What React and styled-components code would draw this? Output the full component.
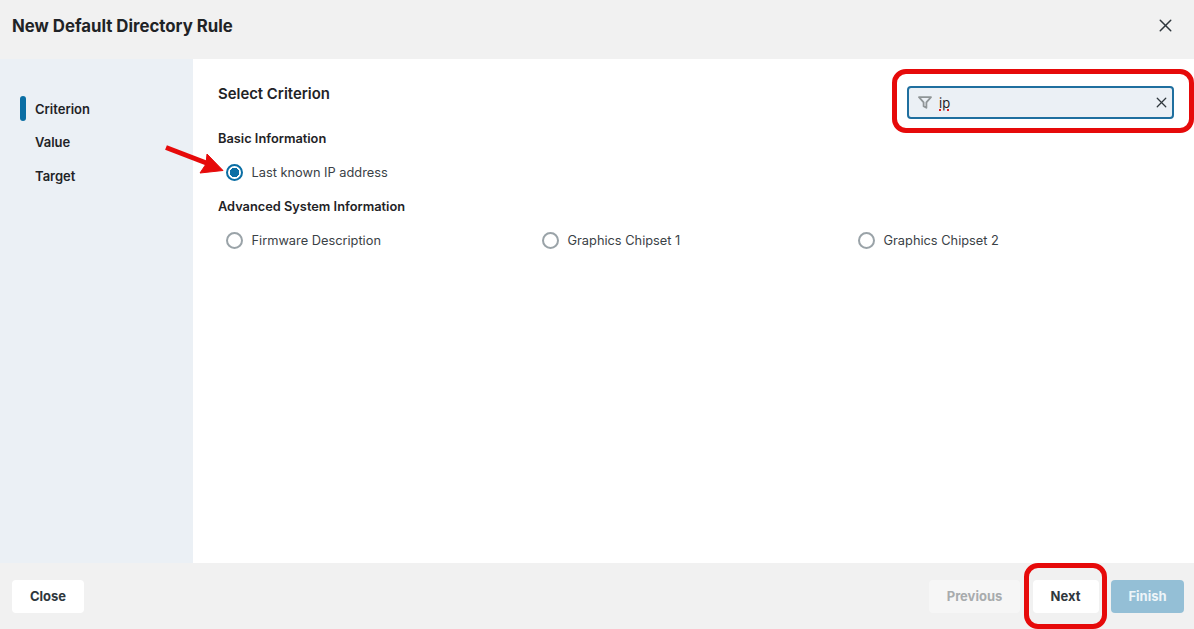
import React, { useState } from 'react';
import styled, { createGlobalStyle } from 'styled-components';
import { X } from 'lucide-react';

const GlobalStyle = createGlobalStyle`
  html, body {
    margin: 0;
    padding: 0;
    background: #fff;
    font-family: Inter, "Liberation Sans", sans-serif;
    color: #1f2326;
  }
  * { box-sizing: border-box; }
`;

const basicOptions = ['Last known IP address'];
const advancedOptions = ['Firmware Description', 'Graphics Chipset 1', 'Graphics Chipset 2'];
const steps = ['Criterion', 'Value', 'Target'];

function App() {
  const [selected, setSelected] = useState('Last known IP address');

  const renderOption = (label) => (
    <RadioRow key={label} onClick={() => setSelected(label)}>
      <RadioCircle checked={selected === label} />
      <span>{label}</span>
    </RadioRow>
  );

  return (
    <Dialog>
      <GlobalStyle />
      <Header>
        <Title>New Default Directory Rule</Title>
        <IconButton><X size={21} strokeWidth={1.7} /></IconButton>
      </Header>

      <Body>
        <Sidebar>
          {steps.map((step, i) => (
            <Step key={step} active={i === 0}>{step}</Step>
          ))}
        </Sidebar>

        <Main>
          <TopRow>
            <Heading>Select Criterion</Heading>
            <SearchBox>
              <svg width="14" height="13" viewBox="0 0 14 13" fill="none" stroke="#8f9597" strokeWidth="1.8" strokeLinejoin="round">
                <path d="M1 1.2h12L8.4 6.4v5.4L5.6 10.2V6.4z" />
              </svg>
              <SearchText><Misspelled>ip</Misspelled></SearchText>
              <X size={17} strokeWidth={1.8} color="#2f373d" />
            </SearchBox>
          </TopRow>

          <GroupTitle>Basic Information</GroupTitle>
          <OptionGrid>{basicOptions.map(renderOption)}</OptionGrid>

          <GroupTitle>Advanced System Information</GroupTitle>
          <OptionGrid>{advancedOptions.map(renderOption)}</OptionGrid>
        </Main>
      </Body>

      <Footer>
        <Button width={72}>Close</Button>
        <FooterRight>
          <Button width={91} disabled>Previous</Button>
          <Button width={66}>Next</Button>
          <Button width={73} primary>Finish</Button>
        </FooterRight>
      </Footer>

      {/* red annotations on top of the screenshot */}
      <Highlight x={892} y={69} w={302} h={64} />
      <Highlight x={1024} y={563} w={83} h={66} />
      <Arrow width="64" height="40" viewBox="0 0 64 40">
        <path d="M1 3.5 L44 20" stroke="#e60a0a" strokeWidth="5" fill="none" />
        <path d="M42 10 L58 26.5 L35 29 L41 20 Z" fill="#e60a0a" stroke="#e60a0a" strokeWidth="1" strokeLinejoin="round" />
      </Arrow>
    </Dialog>
  );
}

export default App;

const Dialog = styled.div`
  position: relative;
  width: 1194px;
  height: 629px;
  display: flex;
  flex-direction: column;
  overflow: hidden;
  background: #fff;
`;

const Header = styled.div`
  height: 59px;
  flex: none;
  display: flex;
  align-items: center;
  justify-content: space-between;
  padding: 0 18px 8px 12px;
  background: #f1f1f1;
`;

const Title = styled.div`
  font-size: 16.8px;
  font-weight: 700;
  color: #1f2326;
`;

const IconButton = styled.div`
  display: flex;
  color: #2f373d;
  cursor: pointer;
`;

const Body = styled.div`
  flex: 1;
  display: flex;
  min-height: 0;
`;

const Sidebar = styled.div`
  width: 193px;
  flex: none;
  background: #ebf0f5;
  padding: 33px 0 0 20px;
  display: flex;
  flex-direction: column;
`;

const Step = styled.div`
  position: relative;
  height: 33.5px;
  padding-left: 15px;
  display: flex;
  align-items: center;
  font-size: 13px;
  font-weight: 600;
  color: #1f2326;

  &::before {
    content: '';
    display: ${props => (props.active ? 'block' : 'none')};
    position: absolute;
    left: 0;
    top: 4px;
    width: 6px;
    height: 25px;
    border-radius: 3px;
    background: #0a6ea4;
  }
`;

const Main = styled.div`
  flex: 1;
  padding: 27px 20px 0 25px;
`;

const TopRow = styled.div`
  display: flex;
  justify-content: space-between;
  align-items: flex-start;
  height: 45px;
`;

const Heading = styled.div`
  font-size: 14.9px;
  font-weight: 600;
  line-height: 16px;
  color: #1f2326;
`;

const SearchBox = styled.div`
  width: 267px;
  height: 33px;
  display: flex;
  align-items: center;
  padding: 0 2px 0 9px;
  background: #ebf0f5;
  border: 2px solid #1f6f9f;
  border-radius: 4px;
`;

const SearchText = styled.div`
  flex: 1;
  padding-left: 7px;
  font-size: 13px;
  color: #1f2326;
`;

const Misspelled = styled.span`
  text-decoration: underline dotted #e02020 1.5px;
  text-underline-offset: 2px;
`;

const GroupTitle = styled.div`
  font-size: 12.8px;
  font-weight: 600;
  line-height: 16px;
  height: 16px;
  color: #1f2326;
`;

const OptionGrid = styled.div`
  display: grid;
  grid-template-columns: repeat(3, 316px);
  padding-left: 8px;
  height: 52px;
  padding-top: 16px;
`;

const RadioRow = styled.label`
  display: flex;
  align-items: center;
  gap: 8.5px;
  height: 18px;
  font-size: 12.8px;
  color: #3a4146;
  cursor: pointer;
`;

const RadioCircle = styled.span`
  width: 17px;
  height: 17px;
  flex: none;
  border-radius: 50%;
  border: 2px solid ${props => (props.checked ? '#0a6ea4' : '#9aa3a8')};
  background: ${props => (props.checked ? 'radial-gradient(circle, #0a6ea4 0 4.5px, #fff 5px)' : '#fff')};
`;

const Footer = styled.div`
  height: 66px;
  flex: none;
  display: flex;
  align-items: center;
  justify-content: space-between;
  padding: 0 10px 0 12px;
  background: #f1f1f1;
`;

const FooterRight = styled.div`
  display: flex;
  gap: 12.5px;
`;

const Button = styled.button`
  width: ${props => props.width}px;
  height: 33px;
  border: none;
  border-radius: 4px;
  font-family: inherit;
  font-size: 13px;
  font-weight: 700;
  cursor: pointer;
  background: ${props => (props.primary ? '#94bfd6' : props.disabled ? '#f6f6f6' : '#fff')};
  color: ${props => (props.primary ? '#eef5f9' : props.disabled ? '#a8abad' : '#2f373d')};
`;

const Highlight = styled.div`
  position: absolute;
  left: ${props => props.x}px;
  top: ${props => props.y}px;
  width: ${props => props.w}px;
  height: ${props => props.h}px;
  border: 5px solid #e60a0a;
  border-radius: 14px;
  pointer-events: none;
`;

const Arrow = styled.svg`
  position: absolute;
  left: 165px;
  top: 144px;
  pointer-events: none;
`;
